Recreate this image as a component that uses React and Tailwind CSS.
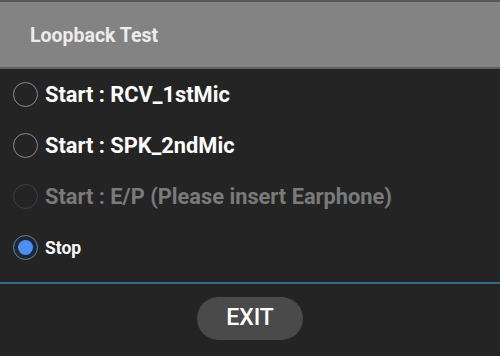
export default function App() {
  const rows = [
    { label: "Start : RCV_1stMic", state: "normal" },
    { label: "Start : SPK_2ndMic", state: "normal" },
    { label: "Start : E/P (Please insert Earphone)", state: "disabled" },
    { label: "Stop", state: "checked" },
  ];
  return (
    <div className="w-[500px] h-[356px] bg-[#242424] flex flex-col overflow-hidden" style={{ fontFamily: "Roboto, 'Liberation Sans', sans-serif" }}>
      <div className="h-[2px] bg-[#575757]" />
      <div className="h-[67px] bg-[#838383] flex items-center pl-[30px] border-b-2 border-[#5f5f5f]">
        <span className="text-[19.5px] font-bold text-[#ececec] mt-[3px]">Loopback Test</span>
      </div>
      <div className="flex flex-col">
        {rows.map((r, i) => (
          <div key={i} className="h-[51px] flex items-center pl-[13px]">
            {r.state === "checked" ? (
              <div className="w-[25px] h-[25px] rounded-full border border-[#6e819a] bg-[#1c2838] flex items-center justify-center">
                <div className="w-[15px] h-[15px] rounded-full bg-[#4b8ff3]" />
              </div>
            ) : (
              <div className={`w-[25px] h-[25px] rounded-full border ${r.state === "disabled" ? "border-[#3c4048]" : "border-[#8a8a8a]"}`} />
            )}
            <span
              className={`ml-[7px] font-bold mt-[1px] ${r.state === "checked" ? "text-[17.5px] text-white" : r.state === "disabled" ? "text-[21.8px] text-[#7a7a7a]" : "text-[21.8px] text-white"}`}
            >
              {r.label}
            </span>
          </div>
        ))}
      </div>
      <div className="mt-[9px] h-[2px] bg-[#2f6d87]" />
      <div className="flex justify-center pt-[13px]">
        <button className="w-[106px] h-[43px] rounded-full bg-[#4a4a4a] text-white text-[23px] font-medium">EXIT</button>
      </div>
    </div>
  );
}
